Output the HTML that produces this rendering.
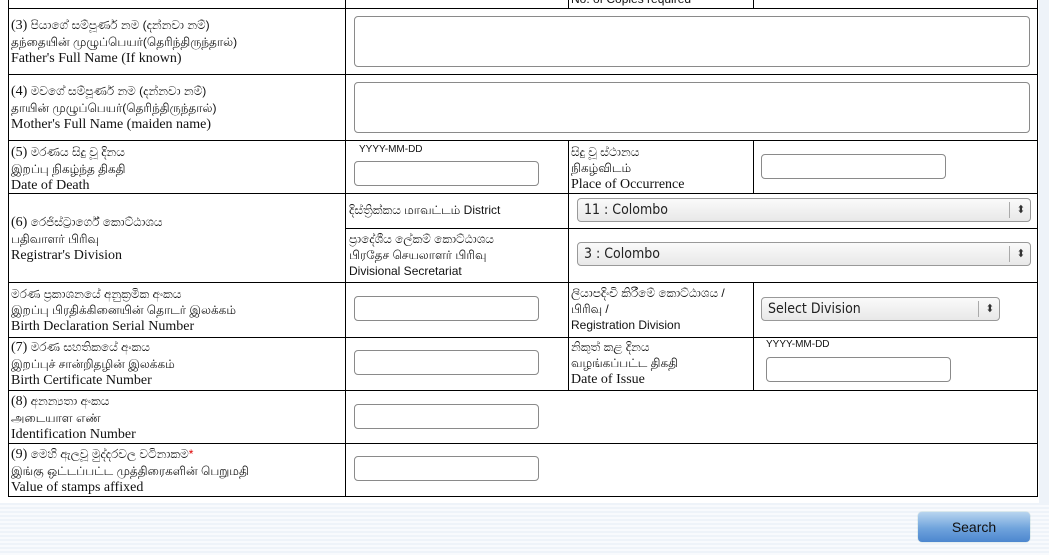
<!DOCTYPE html>
<html><head><meta charset="utf-8"><style>
body{margin:0;width:1049px;height:555px;position:relative;overflow:hidden;background:#fff;font-family:"Liberation Sans","DejaVu Sans",sans-serif;}
.h{position:absolute;height:1px;background:#000;}
.v{position:absolute;width:1px;background:#000;}
.l{position:absolute;font-size:12px;line-height:16px;color:#111;white-space:nowrap;}
.e{font-family:"Liberation Serif",serif;font-size:14px;}
.s{font-size:12px;}
.in{position:absolute;border:1px solid #8a8a8a;border-radius:4px;background:#fff;box-sizing:border-box;}
.sel{position:absolute;border:1px solid #999;border-radius:4px;background:linear-gradient(#fafafa,#e8e8e8);box-sizing:border-box;font-family:"DejaVu Sans Condensed","DejaVu Sans",sans-serif;font-size:14px;line-height:22px;padding-left:6px;color:#222;}
.sel:after{content:"";position:absolute;right:20px;top:3px;bottom:3px;width:1px;background:#aaa;}
.sel span{position:absolute;right:5px;top:0;font-size:11px;color:#333;}
.stripes{position:absolute;left:0;top:503px;width:1049px;height:52px;background:repeating-linear-gradient(#eef3f9 0 2px,#f8fafd 2px 4px);}
.btn{position:absolute;left:918px;top:512px;width:112px;height:30px;border-radius:4px;background:linear-gradient(#b8d4ef,#6fa3dc 55%,#4c86cf);color:#111;font-size:14px;text-align:center;line-height:31px;box-shadow:0 0 1px #7aa;}
</style></head><body>
<div style="position:absolute;left:1039px;top:0;width:10px;height:503px;background:#eef3f9"></div>
<div class="stripes"></div>
<div class="v" style="left:345px;top:0;height:497px"></div>
<div class="v" style="left:753px;top:0;height:8px"></div>
<div class="v" style="left:568px;top:0;height:8px"></div>
<div class="l s" style="left:571px;top:-9px">No. of Copies required</div>
<div class="v" style="left:8px;top:0;height:497px"></div>
<div class="v" style="left:1037px;top:0;height:497px"></div>
<div class="h" style="left:8px;width:1030px;top:8px"></div>
<div class="h" style="left:8px;width:1030px;top:74px"></div>
<div class="h" style="left:8px;width:1030px;top:140px"></div>
<div class="h" style="left:8px;width:1030px;top:193px"></div>
<div class="h" style="left:345px;width:693px;top:228px"></div>
<div class="h" style="left:8px;width:1030px;top:282px"></div>
<div class="h" style="left:8px;width:1030px;top:337px"></div>
<div class="h" style="left:8px;width:1030px;top:390px"></div>
<div class="h" style="left:8px;width:1030px;top:443px"></div>
<div class="h" style="left:8px;width:1030px;top:496px"></div>
<div class="v" style="left:568px;top:140px;height:251px"></div>
<div class="v" style="left:753px;top:140px;height:53px"></div>
<div class="v" style="left:753px;top:282px;height:109px"></div>

<div class="l" style="left:11px;top:17px"><span class="e">(3)</span> පියාගේ සම්පූර්ණ නම (දන්නවා නම්)<br>தந்தையின் முழுப்பெயர்(தெரிந்திருந்தால்)<br><span class="e">Father's Full Name (If known)</span></div>
<div class="in" style="left:354px;top:16px;width:676px;height:51px"></div>
<div class="l" style="left:11px;top:83px"><span class="e">(4)</span> මවගේ සම්පූර්ණ නම (දන්නවා නම්)<br>தாயின் முழுப்பெயர்(தெரிந்திருந்தால்)<br><span class="e">Mother's Full Name (maiden name)</span></div>
<div class="in" style="left:354px;top:82px;width:676px;height:51px"></div>

<div class="l" style="left:11px;top:144px"><span class="e">(5)</span> මරණය සිදු වූ දිනය<br>இறப்பு நிகழ்ந்த திகதி<br><span class="e">Date of Death</span></div>
<div class="l" style="left:359px;top:142px;font-size:10px">YYYY-MM-DD</div>
<div class="in" style="left:354px;top:161px;width:185px;height:25px"></div>
<div class="l" style="left:571px;top:144px">සිදු වූ ස්ථානය<br>நிகழ்விடம்<br><span class="e">Place of Occurrence</span></div>
<div class="in" style="left:761px;top:154px;width:185px;height:25px"></div>

<div class="l" style="left:11px;top:214px"><span class="e">(6)</span> රෙජිස්ට්‍රාර්ගේ කොට්ඨාශය<br>பதிவாளர் பிரிவு<br><span class="e">Registrar's Division</span></div>
<div class="l s" style="left:349px;top:202px">දිස්ත්‍රික්කය மாவட்டம் District</div>
<div class="sel" style="left:577px;top:198px;width:454px;height:24px">11 : Colombo<span>⬍</span></div>
<div class="l" style="left:349px;top:231px">ප්‍රාදේශීය ලේකම් කොට්ඨාශය<br>பிரதேச செயலாளர் பிரிவு<br><span class="s">Divisional Secretariat</span></div>
<div class="sel" style="left:577px;top:242px;width:454px;height:24px">3 : Colombo<span>⬍</span></div>

<div class="l" style="left:11px;top:286px">මරණ ප්‍රකාශනයේ අනුක්‍රමික අංකය<br>இறப்பு பிரதிக்கினையின் தொடர் இலக்கம்<br><span class="e">Birth Declaration Serial Number</span></div>
<div class="in" style="left:354px;top:296px;width:185px;height:25px"></div>
<div class="l" style="left:571px;top:285px">ලියාපදිංචි කිරීමේ කොට්ඨාශය /<br>பிரிவு /<br><span class="s">Registration Division</span></div>
<div class="sel" style="left:761px;top:297px;width:239px;height:24px">Select Division<span>⬍</span></div>

<div class="l" style="left:11px;top:339px"><span class="e">(7)</span> මරණ සහතිකයේ අංකය<br>இறப்புச் சான்றிதழின் இலக்கம்<br><span class="e">Birth Certificate Number</span></div>
<div class="in" style="left:354px;top:350px;width:185px;height:25px"></div>
<div class="l" style="left:571px;top:339px">නිකුත් කළ දිනය<br>வழங்கப்பட்ட திகதி<br><span class="e">Date of Issue</span></div>
<div class="l" style="left:766px;top:337px;font-size:10px">YYYY-MM-DD</div>
<div class="in" style="left:766px;top:357px;width:185px;height:25px"></div>

<div class="l" style="left:11px;top:393px"><span class="e">(8)</span> අනන්‍යතා අංකය<br>அடையாள எண்<br><span class="e">Identification Number</span></div>
<div class="in" style="left:354px;top:404px;width:185px;height:25px"></div>
<div class="l" style="left:11px;top:446px"><span class="e">(9)</span> මෙහි ඇලවූ මුද්දරවල වටිනාකම<span style="color:#d00">*</span><br>இங்கு ஒட்டப்பட்ட முத்திரைகளின் பெறுமதி<br><span class="e">Value of stamps affixed</span></div>
<div class="in" style="left:354px;top:456px;width:185px;height:25px"></div>

<div class="btn">Search</div>
</body></html>
